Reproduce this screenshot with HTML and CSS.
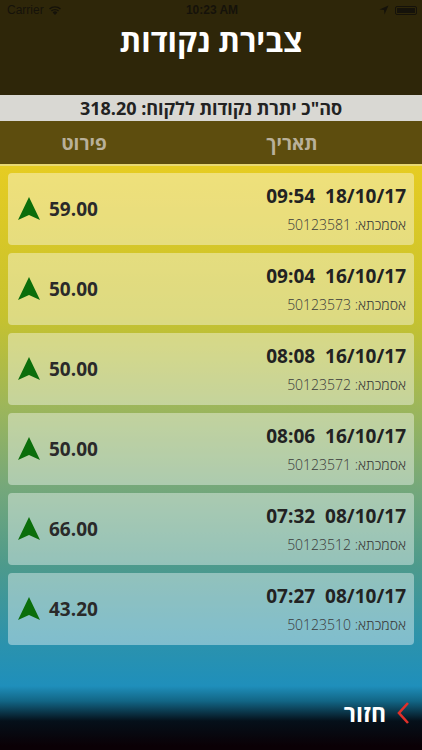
FILE: index.html
```html
<!DOCTYPE html>
<html lang="he">
<head>
    <meta charset="UTF-8">
    <meta name="viewport" content="width=device-width, initial-scale=1.0">
    <title>צבירת נקודות</title>
    <link rel="stylesheet" href="styles.css">
</head>
<body>
    <div class="app">
        <!-- Top header with status bar -->
        <div class="top">
            <div class="status-bar">
                <div class="status-left">
                    <span>Carrier</span>
                    <svg class="wifi" width="14" height="10" viewBox="0 0 14 10">
                        <path d="M7 10 L4.6 7.4 A3.4 3.4 0 0 1 9.4 7.4 Z" fill="#15120a"/>
                        <path d="M2.9 5.6 A5.8 5.8 0 0 1 11.1 5.6 L10.1 6.6 A4.4 4.4 0 0 0 3.9 6.6 Z" fill="#15120a"/>
                        <path d="M1 3.6 A8.6 8.6 0 0 1 13 3.6 L12 4.6 A7.2 7.2 0 0 0 2 4.6 Z" fill="#15120a"/>
                    </svg>
                </div>
                <div class="status-time">10:23 AM</div>
                <div class="status-right">
                    <svg width="10" height="10" viewBox="0 0 10 10">
                        <path d="M9.5 0.5 L0.5 4.5 L5 5 L5.5 9.5 Z" fill="#15120a"/>
                    </svg>
                    <div class="battery"><div class="battery-fill"></div></div>
                </div>
            </div>
            <h1 class="title">צבירת נקודות</h1>
        </div>

        <div class="total">סה"כ יתרת נקודות ללקוח: 318.20</div>

        <div class="cols">
            <div class="col col-date">תאריך</div>
            <div class="col col-detail">פירוט</div>
        </div>

        <div class="content">
            <div class="list">
                <div class="card">
                    <div class="info">
                        <div class="when"><span>18/10/17</span><span>09:54</span></div>
                        <div class="ref">אסמכתא: 50123581</div>
                    </div>
                    <div class="amount">
                        <span>59.00</span>
                        <svg class="arrow" width="22" height="24" viewBox="0 0 22 24"><path d="M11 0 L22 23 L11 18 L0 23 Z" fill="#0b6e0b"/></svg>
                    </div>
                </div>
                <div class="card">
                    <div class="info">
                        <div class="when"><span>16/10/17</span><span>09:04</span></div>
                        <div class="ref">אסמכתא: 50123573</div>
                    </div>
                    <div class="amount">
                        <span>50.00</span>
                        <svg class="arrow" width="22" height="24" viewBox="0 0 22 24"><path d="M11 0 L22 23 L11 18 L0 23 Z" fill="#0b6e0b"/></svg>
                    </div>
                </div>
                <div class="card">
                    <div class="info">
                        <div class="when"><span>16/10/17</span><span>08:08</span></div>
                        <div class="ref">אסמכתא: 50123572</div>
                    </div>
                    <div class="amount">
                        <span>50.00</span>
                        <svg class="arrow" width="22" height="24" viewBox="0 0 22 24"><path d="M11 0 L22 23 L11 18 L0 23 Z" fill="#0b6e0b"/></svg>
                    </div>
                </div>
                <div class="card">
                    <div class="info">
                        <div class="when"><span>16/10/17</span><span>08:06</span></div>
                        <div class="ref">אסמכתא: 50123571</div>
                    </div>
                    <div class="amount">
                        <span>50.00</span>
                        <svg class="arrow" width="22" height="24" viewBox="0 0 22 24"><path d="M11 0 L22 23 L11 18 L0 23 Z" fill="#0b6e0b"/></svg>
                    </div>
                </div>
                <div class="card">
                    <div class="info">
                        <div class="when"><span>08/10/17</span><span>07:32</span></div>
                        <div class="ref">אסמכתא: 50123512</div>
                    </div>
                    <div class="amount">
                        <span>66.00</span>
                        <svg class="arrow" width="22" height="24" viewBox="0 0 22 24"><path d="M11 0 L22 23 L11 18 L0 23 Z" fill="#0b6e0b"/></svg>
                    </div>
                </div>
                <div class="card">
                    <div class="info">
                        <div class="when"><span>08/10/17</span><span>07:27</span></div>
                        <div class="ref">אסמכתא: 50123510</div>
                    </div>
                    <div class="amount">
                        <span>43.20</span>
                        <svg class="arrow" width="22" height="24" viewBox="0 0 22 24"><path d="M11 0 L22 23 L11 18 L0 23 Z" fill="#0b6e0b"/></svg>
                    </div>
                </div>
            </div>

            <!-- Back button -->
            <div class="footer">
                <svg class="chevron" width="14" height="24" viewBox="0 0 14 24"><path d="M12 2 L3 12 L12 22" stroke="#e0302a" stroke-width="2.6" fill="none"/></svg>
                <span class="back">חזור</span>
            </div>
        </div>
    </div>
</body>
</html>
```

FILE: styles.css
```css
body {
    margin: 0;
    padding: 0;
    font-family: "Open Sans", "DejaVu Sans", sans-serif;
    background-color: #0a0005;
}

.app {
    width: 422px;
    height: 750px;
    display: flex;
    flex-direction: column;
    overflow: hidden;
}

.top {
    background-color: #2e2609;
    height: 95px;
    display: flex;
    flex-direction: column;
}

.status-bar {
    height: 20px;
    display: flex;
    justify-content: space-between;
    align-items: center;
    padding: 0 5px 0 7px;
    font-size: 12px;
    color: #15120a;
    font-family: "Liberation Sans", Arial, sans-serif;
}

.status-left {
    display: flex;
    align-items: center;
    gap: 4px;
    width: 120px;
}

.status-time {
    font-weight: bold;
    font-size: 12px;
}

.status-right {
    display: flex;
    align-items: center;
    justify-content: flex-end;
    gap: 6px;
    width: 120px;
}

.battery {
    width: 22px;
    height: 9px;
    border: 1px solid #15120a;
    border-radius: 2px;
    padding: 1px;
    box-sizing: border-box;
}

.battery-fill {
    width: 100%;
    height: 100%;
    background-color: #15120a;
}

.title {
    margin: 0;
    text-align: center;
    color: #ffffff;
    font-size: 31px;
    font-weight: bold;
    line-height: 40px;
}

.total {
    direction: rtl;
    background-color: #d9d8d3;
    height: 26px;
    line-height: 26px;
    text-align: center;
    font-size: 18px;
    font-weight: bold;
    color: #222222;
}

.cols {
    direction: rtl;
    display: flex;
    height: 43px;
    align-items: center;
    background-color: #5d4d0e;
    border-bottom: 2px solid #e8d974;
}

.col {
    flex: 1;
    text-align: center;
    color: #b9b09a;
    font-size: 19px;
    font-weight: bold;
}

.col-date {
    padding-right: 46px;
}

.col-detail {
    padding-right: 40px;
}

.content {
    flex: 1;
    display: flex;
    flex-direction: column;
    background: linear-gradient(to bottom,
        #e6cc22 0px,
        #c6c22e 150px,
        #9db65a 240px,
        #76a87a 320px,
        #4d9a8c 400px,
        #2a92ae 480px,
        #1f8fbb 520px,
        #126686 535px,
        #05101a 555px,
        #0a0005 580px);
}

.list {
    display: flex;
    flex-direction: column;
    gap: 8px;
    padding: 7px 8px 0 8px;
}

.card {
    direction: rtl;
    height: 72px;
    box-sizing: border-box;
    display: flex;
    justify-content: space-between;
    align-items: center;
    padding: 0 8px 0 10px;
    background-color: rgba(255, 255, 255, 0.4);
    border-radius: 4px;
}

.info {
    display: flex;
    flex-direction: column;
    gap: 6px;
}

.when {
    display: flex;
    gap: 10px;
    font-size: 19px;
    font-weight: bold;
    color: #222222;
    line-height: 26px;
}

.ref {
    font-size: 14px;
    font-weight: 300;
    color: #3a3a3a;
    line-height: 20px;
}

.amount {
    display: flex;
    align-items: center;
    gap: 9px;
    font-size: 19px;
    font-weight: bold;
    color: #2a2a2a;
}

.footer {
    direction: rtl;
    margin-top: auto;
    height: 75px;
    display: flex;
    align-items: center;
    gap: 10px;
    padding-right: 12px;
}

.back {
    color: #ffffff;
    font-size: 23px;
    font-weight: bold;
}
```
